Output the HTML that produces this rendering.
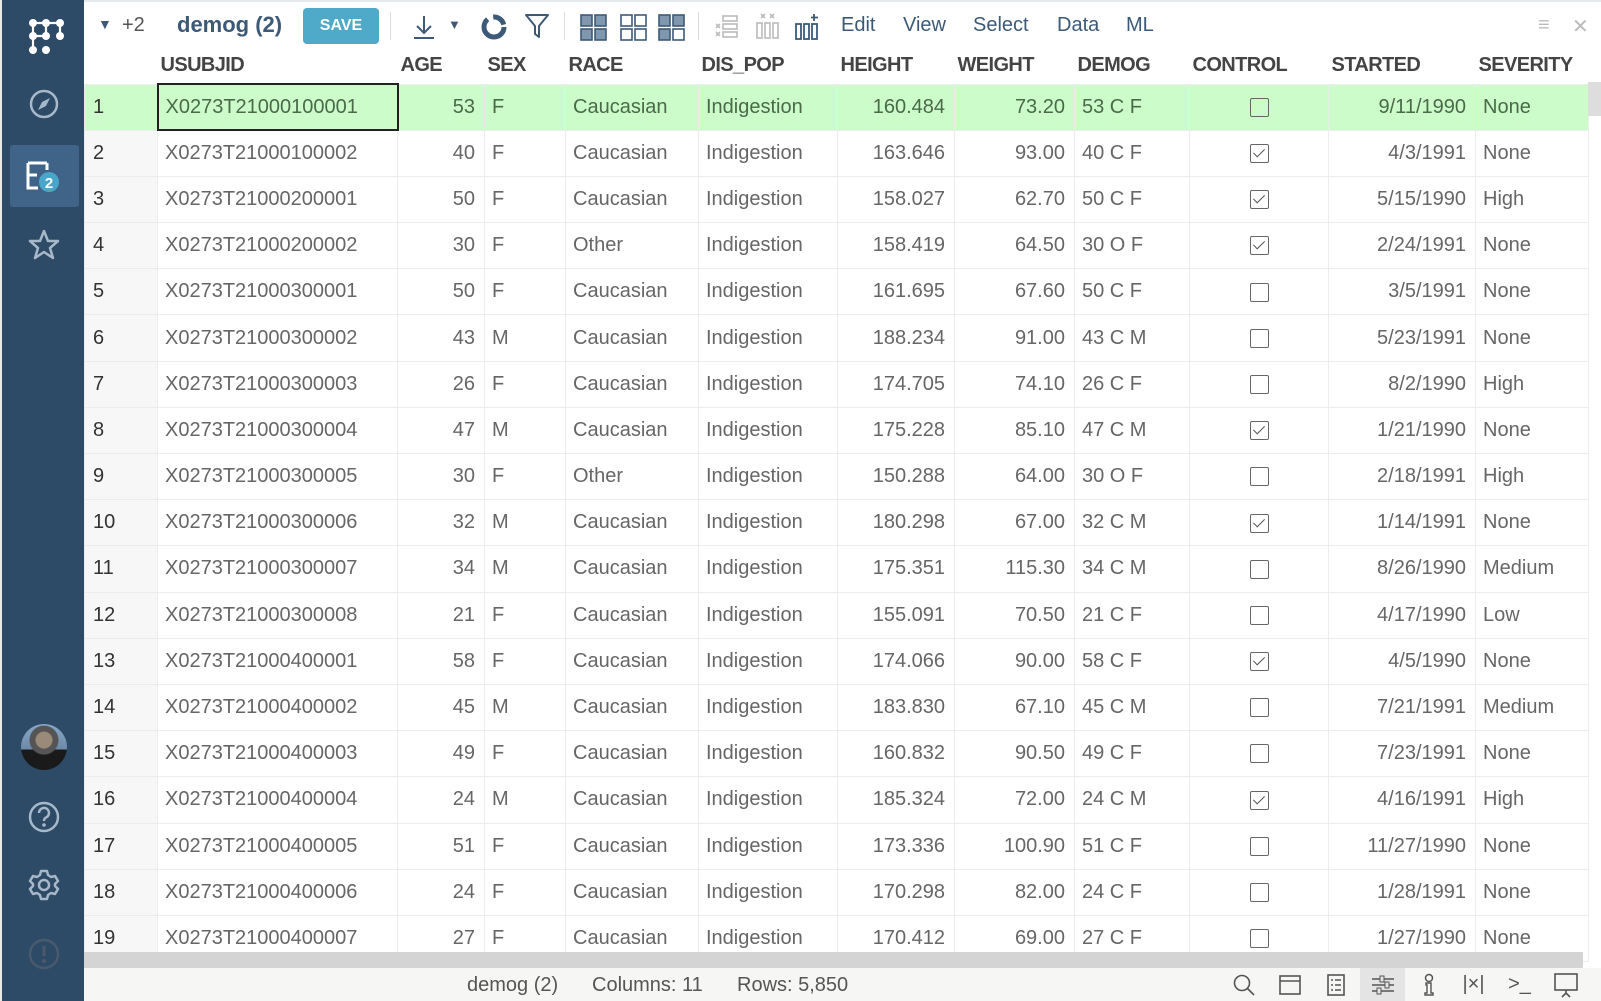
<!DOCTYPE html>
<html><head><meta charset="utf-8"><style>
*{box-sizing:border-box;margin:0;padding:0}
body{width:1601px;height:1001px;overflow:hidden;background:#fff;font-family:"Liberation Sans",sans-serif;color:#555;position:relative}
#side{position:absolute;left:0;top:0;width:84px;height:1001px;background:#2d4a66;border-left:2px solid #e8e8e8}
.ic{position:absolute;left:0;width:84px;display:flex;justify-content:center}
#tb{position:absolute;left:84px;top:0;right:0;height:48px;border-top:2px solid #e6e9ec}
.t{position:absolute;top:12px;font-size:20px;color:#3c5a78}
table{position:absolute;left:84px;top:48px;border-collapse:collapse;table-layout:fixed;font-size:20px}
th{height:36px;text-align:left;font-weight:bold;color:#444;padding:0 3px;white-space:nowrap;overflow:hidden;font-size:20px;letter-spacing:-0.6px}
td{height:46.2px;border:1px solid #ececec;padding:0 7px;white-space:nowrap;overflow:hidden;color:#666}
td.n{text-align:right;padding-right:9px}
td.r{background:#f7f7f7;color:#333;padding-left:8px}
tr.sel td{background:#ccfcca;color:#4a6a4a}
tr.sel td.r{color:#333}
td.u{border:2px solid #222 !important}
.cb{display:inline-block;width:19px;height:19px;border:1.5px solid #666;border-radius:2px;vertical-align:middle;position:relative}
.cb.c::after{content:"";position:absolute;left:5px;top:1px;width:5px;height:10px;border-right:1.5px solid #555;border-bottom:1.5px solid #555;transform:rotate(45deg)}
td.k{text-align:center}
#hs{position:absolute;left:84px;top:952px;width:1499px;height:16px;background:#d4d4d4}
#vs{position:absolute;left:1588px;top:82px;width:13px;height:34px;background:#ddd}
#sb{position:absolute;left:84px;top:968px;right:0;height:33px;background:#f6f6f4;font-size:20px;color:#555}
#sb span{position:absolute;top:6px}
.si{position:absolute;top:0;height:33px;width:45px;display:flex;align-items:center;justify-content:center}
</style></head><body>
<div id="side">
<div class="ic" style="top:14px"><svg width="44" height="44" viewBox="0 0 44 44"><g stroke="#fff" stroke-width="2.2" fill="none"><path d="M11 9H38M11 9V36M24 9V22M38 9V22M11 22H24"/></g><g fill="#fff"><circle cx="11" cy="9" r="4"/><circle cx="24" cy="9" r="4"/><circle cx="38" cy="9" r="4"/><circle cx="11" cy="22" r="4"/><circle cx="24" cy="22" r="4"/><circle cx="38" cy="22" r="4"/><circle cx="11" cy="36" r="4"/><circle cx="24" cy="36" r="4"/></g></svg></div>
<div class="ic" style="top:88px"><svg width="32" height="32" viewBox="0 0 32 32"><circle cx="16" cy="16" r="13" stroke="#a7b8c8" stroke-width="2.5" fill="none"/><path d="M22 10L18 18 10 22 14 14Z" fill="#a7b8c8"/></svg></div>
<div style="position:absolute;left:8px;top:145px;width:69px;height:62px;background:#3f6488;border-radius:3px"></div>
<div class="ic" style="top:160px"><svg width="40" height="34" viewBox="0 0 40 34"><path d="M4 3H23M4 3V28H14M4 15H13M23 3V10" stroke="#fff" stroke-width="3" fill="none"/><circle cx="25" cy="22" r="10" fill="#4aa6c8"/><text x="25" y="28" font-size="15" font-weight="bold" fill="#fff" text-anchor="middle" font-family="Liberation Sans">2</text></svg></div>
<div class="ic" style="top:228px"><svg width="34" height="34" viewBox="0 0 34 34"><path d="M17 3L21 13 31 13 23 20 26 30 17 24 8 30 11 20 3 13 13 13Z" stroke="#a7b8c8" stroke-width="2.5" fill="none" stroke-linejoin="round"/></svg></div>
<div class="ic" style="top:724px"><div style="width:46px;height:46px;border-radius:50%;background:radial-gradient(circle at 50% 35%,#9b8a7a 0 8px,#555 9px 14px,transparent 15px),linear-gradient(#8aa8c8,#6c8aa8 55%,#1a1a1a 56%);"></div></div>
<div class="ic" style="top:800px"><svg width="34" height="34" viewBox="0 0 34 34"><circle cx="17" cy="17" r="14" stroke="#a7b8c8" stroke-width="2.5" fill="none"/><path d="M12 13a5 5 0 1 1 7 4.5c-1.5.8-2 1.5-2 3.5" stroke="#a7b8c8" stroke-width="2.5" fill="none"/><circle cx="17" cy="25" r="1.8" fill="#a7b8c8"/></svg></div>
<div class="ic" style="top:868px"><svg width="34" height="34" viewBox="0 0 34 34"><path d="M14 3h6l1 4 3 2 4-1 3 5-3 3v2l3 3-3 5-4-1-3 2-1 4h-6l-1-4-3-2-4 1-3-5 3-3v-2l-3-3 3-5 4 1 3-2z" stroke="#a7b8c8" stroke-width="2.5" fill="none" stroke-linejoin="round"/><circle cx="17" cy="17" r="5" stroke="#a7b8c8" stroke-width="2.5" fill="none"/></svg></div>
<div class="ic" style="top:937px"><svg width="34" height="34" viewBox="0 0 34 34"><circle cx="17" cy="17" r="14" stroke="#4a5a6c" stroke-width="2.5" fill="none"/><path d="M17 9v10" stroke="#4a5a6c" stroke-width="3"/><circle cx="17" cy="24" r="2" fill="#4a5a6c"/></svg></div>
</div>

<div id="tb">
<div class="t" style="left:14px;top:14px;font-size:14px;color:#3c5a78">▼</div>
<div class="t" style="left:38px;color:#555">+2</div>
<div class="t" style="left:93px;font-weight:bold;font-size:22px;top:10px;color:#3c5a78">demog (2)</div>
<div style="position:absolute;left:219px;top:6px;width:76px;height:36px;background:#4fa9c8;border-radius:4px;color:#fff;font-weight:bold;font-size:16px;text-align:center;line-height:36px">SAVE</div>
<div style="position:absolute;left:306px;top:10px;width:1px;height:28px;background:#ddd"></div>
<svg style="position:absolute;left:328px;top:12px" width="24" height="26" viewBox="0 0 24 26"><path d="M12 2V19M5 12l7 7 7-7M2 24H22" stroke="#3c5a78" stroke-width="2" fill="none"/></svg>
<div class="t" style="left:364px;top:15px;font-size:13px">▼</div>
<svg style="position:absolute;left:396px;top:11px" width="28" height="28" viewBox="0 0 28 28"><circle cx="14" cy="14" r="10" stroke="#3c5a78" stroke-width="5" fill="none" stroke-dasharray="40 6 14 6"/></svg>
<svg style="position:absolute;left:439px;top:10px" width="28" height="28" viewBox="0 0 28 28"><path d="M3 3H25L16 14V25L12 22V14Z" stroke="#3c5a78" stroke-width="2" fill="none" stroke-linejoin="round"/></svg>
<div style="position:absolute;left:480px;top:10px;width:1px;height:28px;background:#ddd"></div>
<svg style="position:absolute;left:495px;top:11px" width="200" height="28" viewBox="0 0 200 28"><g stroke="#3c5a78" stroke-width="1.6"><rect x="2" y="2" width="11" height="11" fill="#8197ae"/><rect x="16" y="2" width="11" height="11" fill="#8197ae"/><rect x="2" y="16" width="11" height="11" fill="#8197ae"/><rect x="16" y="16" width="11" height="11" fill="#8197ae"/><rect x="42" y="2" width="11" height="11" fill="none"/><rect x="56" y="2" width="11" height="11" fill="none"/><rect x="42" y="16" width="11" height="11" fill="none"/><rect x="56" y="16" width="11" height="11" fill="none"/><rect x="80" y="2" width="11" height="11" fill="#8197ae"/><rect x="94" y="2" width="11" height="11" fill="#8197ae"/><rect x="80" y="16" width="11" height="11" fill="#8197ae"/><rect x="94" y="16" width="11" height="11" fill="none"/></g></svg>
<div style="position:absolute;left:614px;top:10px;width:1px;height:28px;background:#ddd"></div>
<svg style="position:absolute;left:630px;top:10px" width="110" height="30" viewBox="0 0 110 30"><g stroke="#bbb" stroke-width="1.6" fill="none"><rect x="9" y="4" width="14" height="5"/><rect x="9" y="12" width="14" height="5"/><rect x="9" y="20" width="14" height="5"/><path d="M2 12l4 4M6 12l-4 4M2 20l4 4M6 20l-4 4"/><rect x="43" y="11" width="5" height="15"/><rect x="51" y="11" width="5" height="15"/><rect x="59" y="11" width="5" height="15"/><path d="M47 2l4 4M51 2l-4 4M56 2l4 4M60 2l-4 4"/></g><g stroke="#3c5a78" stroke-width="1.8" fill="none"><rect x="82" y="12" width="5" height="15"/><rect x="90" y="12" width="5" height="15"/><rect x="98" y="12" width="5" height="15"/><path d="M100 2v7M97 5.5h7"/></g></svg>
<div class="t" style="left:757px">Edit</div>
<div class="t" style="left:819px">View</div>
<div class="t" style="left:889px">Select</div>
<div class="t" style="left:973px">Data</div>
<div class="t" style="left:1042px">ML</div>
<div class="t" style="left:1454px;color:#bbb">≡</div>
<div class="t" style="left:1488px;color:#bbb">✕</div>
</div>

<table>
<colgroup><col style="width:73px"><col style="width:240px"><col style="width:87px"><col style="width:81px"><col style="width:133px"><col style="width:139px"><col style="width:117px"><col style="width:120px"><col style="width:115px"><col style="width:139px"><col style="width:147px"><col style="width:113px"></colgroup>
<tr><th></th><th>USUBJID</th><th>AGE</th><th>SEX</th><th>RACE</th><th>DIS_POP</th><th>HEIGHT</th><th>WEIGHT</th><th>DEMOG</th><th>CONTROL</th><th>STARTED</th><th>SEVERITY</th></tr>
<tr class="sel"><td class="r">1</td><td class="u">X0273T21000100001</td><td class="n">53</td><td>F</td><td>Caucasian</td><td>Indigestion</td><td class="n">160.484</td><td class="n">73.20</td><td>53 C F</td><td class="k"><span class="cb"></span></td><td class="n">9/11/1990</td><td>None</td></tr>
<tr><td class="r">2</td><td>X0273T21000100002</td><td class="n">40</td><td>F</td><td>Caucasian</td><td>Indigestion</td><td class="n">163.646</td><td class="n">93.00</td><td>40 C F</td><td class="k"><span class="cb c"></span></td><td class="n">4/3/1991</td><td>None</td></tr>
<tr><td class="r">3</td><td>X0273T21000200001</td><td class="n">50</td><td>F</td><td>Caucasian</td><td>Indigestion</td><td class="n">158.027</td><td class="n">62.70</td><td>50 C F</td><td class="k"><span class="cb c"></span></td><td class="n">5/15/1990</td><td>High</td></tr>
<tr><td class="r">4</td><td>X0273T21000200002</td><td class="n">30</td><td>F</td><td>Other</td><td>Indigestion</td><td class="n">158.419</td><td class="n">64.50</td><td>30 O F</td><td class="k"><span class="cb c"></span></td><td class="n">2/24/1991</td><td>None</td></tr>
<tr><td class="r">5</td><td>X0273T21000300001</td><td class="n">50</td><td>F</td><td>Caucasian</td><td>Indigestion</td><td class="n">161.695</td><td class="n">67.60</td><td>50 C F</td><td class="k"><span class="cb"></span></td><td class="n">3/5/1991</td><td>None</td></tr>
<tr><td class="r">6</td><td>X0273T21000300002</td><td class="n">43</td><td>M</td><td>Caucasian</td><td>Indigestion</td><td class="n">188.234</td><td class="n">91.00</td><td>43 C M</td><td class="k"><span class="cb"></span></td><td class="n">5/23/1991</td><td>None</td></tr>
<tr><td class="r">7</td><td>X0273T21000300003</td><td class="n">26</td><td>F</td><td>Caucasian</td><td>Indigestion</td><td class="n">174.705</td><td class="n">74.10</td><td>26 C F</td><td class="k"><span class="cb"></span></td><td class="n">8/2/1990</td><td>High</td></tr>
<tr><td class="r">8</td><td>X0273T21000300004</td><td class="n">47</td><td>M</td><td>Caucasian</td><td>Indigestion</td><td class="n">175.228</td><td class="n">85.10</td><td>47 C M</td><td class="k"><span class="cb c"></span></td><td class="n">1/21/1990</td><td>None</td></tr>
<tr><td class="r">9</td><td>X0273T21000300005</td><td class="n">30</td><td>F</td><td>Other</td><td>Indigestion</td><td class="n">150.288</td><td class="n">64.00</td><td>30 O F</td><td class="k"><span class="cb"></span></td><td class="n">2/18/1991</td><td>High</td></tr>
<tr><td class="r">10</td><td>X0273T21000300006</td><td class="n">32</td><td>M</td><td>Caucasian</td><td>Indigestion</td><td class="n">180.298</td><td class="n">67.00</td><td>32 C M</td><td class="k"><span class="cb c"></span></td><td class="n">1/14/1991</td><td>None</td></tr>
<tr><td class="r">11</td><td>X0273T21000300007</td><td class="n">34</td><td>M</td><td>Caucasian</td><td>Indigestion</td><td class="n">175.351</td><td class="n">115.30</td><td>34 C M</td><td class="k"><span class="cb"></span></td><td class="n">8/26/1990</td><td>Medium</td></tr>
<tr><td class="r">12</td><td>X0273T21000300008</td><td class="n">21</td><td>F</td><td>Caucasian</td><td>Indigestion</td><td class="n">155.091</td><td class="n">70.50</td><td>21 C F</td><td class="k"><span class="cb"></span></td><td class="n">4/17/1990</td><td>Low</td></tr>
<tr><td class="r">13</td><td>X0273T21000400001</td><td class="n">58</td><td>F</td><td>Caucasian</td><td>Indigestion</td><td class="n">174.066</td><td class="n">90.00</td><td>58 C F</td><td class="k"><span class="cb c"></span></td><td class="n">4/5/1990</td><td>None</td></tr>
<tr><td class="r">14</td><td>X0273T21000400002</td><td class="n">45</td><td>M</td><td>Caucasian</td><td>Indigestion</td><td class="n">183.830</td><td class="n">67.10</td><td>45 C M</td><td class="k"><span class="cb"></span></td><td class="n">7/21/1991</td><td>Medium</td></tr>
<tr><td class="r">15</td><td>X0273T21000400003</td><td class="n">49</td><td>F</td><td>Caucasian</td><td>Indigestion</td><td class="n">160.832</td><td class="n">90.50</td><td>49 C F</td><td class="k"><span class="cb"></span></td><td class="n">7/23/1991</td><td>None</td></tr>
<tr><td class="r">16</td><td>X0273T21000400004</td><td class="n">24</td><td>M</td><td>Caucasian</td><td>Indigestion</td><td class="n">185.324</td><td class="n">72.00</td><td>24 C M</td><td class="k"><span class="cb c"></span></td><td class="n">4/16/1991</td><td>High</td></tr>
<tr><td class="r">17</td><td>X0273T21000400005</td><td class="n">51</td><td>F</td><td>Caucasian</td><td>Indigestion</td><td class="n">173.336</td><td class="n">100.90</td><td>51 C F</td><td class="k"><span class="cb"></span></td><td class="n">11/27/1990</td><td>None</td></tr>
<tr><td class="r">18</td><td>X0273T21000400006</td><td class="n">24</td><td>F</td><td>Caucasian</td><td>Indigestion</td><td class="n">170.298</td><td class="n">82.00</td><td>24 C F</td><td class="k"><span class="cb"></span></td><td class="n">1/28/1991</td><td>None</td></tr>
<tr><td class="r">19</td><td>X0273T21000400007</td><td class="n">27</td><td>F</td><td>Caucasian</td><td>Indigestion</td><td class="n">170.412</td><td class="n">69.00</td><td>27 C F</td><td class="k"><span class="cb"></span></td><td class="n">1/27/1990</td><td>None</td></tr>
</table>
<div id="vs"></div>
<div id="hs"></div>
<div id="sb">
<span style="left:383px">demog (2)</span>
<span style="left:508px">Columns: 11</span>
<span style="left:653px">Rows: 5,850</span>
<div class="si" style="left:1137px"><svg width="24" height="24"><circle cx="10" cy="10" r="7.5" stroke="#555" stroke-width="1.6" fill="none"/><path d="M15 15l7 7" stroke="#555" stroke-width="1.6"/></svg></div>
<div class="si" style="left:1183px"><svg width="24" height="22"><rect x="2" y="2" width="20" height="18" stroke="#555" stroke-width="1.6" fill="none"/><path d="M2 7h20" stroke="#555" stroke-width="1.6"/></svg></div>
<div class="si" style="left:1229px"><svg width="20" height="24"><rect x="2" y="2" width="16" height="20" stroke="#555" stroke-width="1.6" fill="none"/><path d="M5 7h2M9 7h6M5 12h2M9 12h6M5 17h2M9 17h6" stroke="#555" stroke-width="1.4"/></svg></div>
<div class="si" style="left:1276px;background:#e4e4e4"><svg width="24" height="22"><path d="M1 5h22M1 11h22M1 17h22" stroke="#555" stroke-width="1.4"/><rect x="9" y="2" width="4" height="6" fill="#e4e4e4" stroke="#555"/><rect x="14" y="8" width="4" height="6" fill="#e4e4e4" stroke="#555"/><rect x="6" y="14" width="4" height="6" fill="#e4e4e4" stroke="#555"/></svg></div>
<div class="si" style="left:1322px"><svg width="16" height="24"><circle cx="8" cy="5" r="3.5" stroke="#555" stroke-width="1.5" fill="none"/><path d="M5 10h5v10h2v2H4v-2h2v-8H5z" stroke="#555" stroke-width="1.4" fill="none"/></svg></div>
<div class="si" style="left:1367px;font-size:20px;color:#555">|×|</div>
<div class="si" style="left:1413px;font-size:20px;color:#555">&gt;_</div>
<div class="si" style="left:1459px"><svg width="26" height="26"><rect x="2" y="2" width="22" height="16" stroke="#555" stroke-width="1.6" fill="none"/><path d="M13 18v3M9 25l4-4 4 4" stroke="#555" stroke-width="1.6" fill="none"/></svg></div>
</div>
</body></html>
